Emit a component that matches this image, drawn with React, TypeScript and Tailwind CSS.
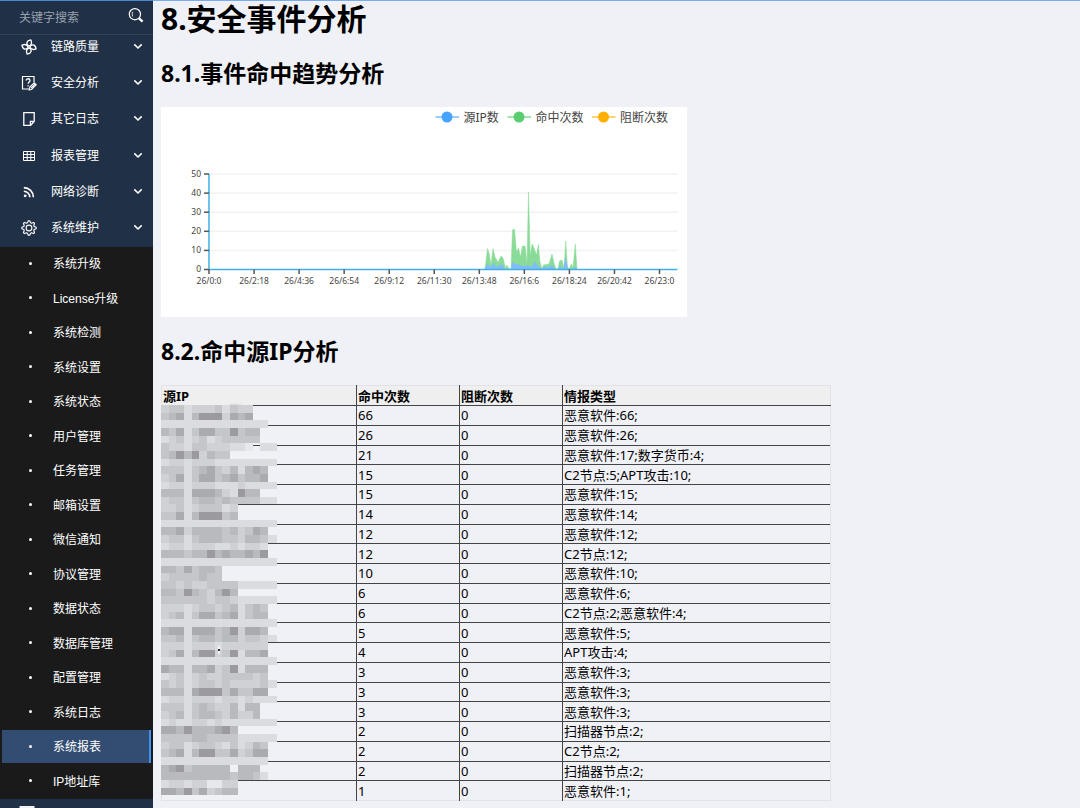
import type { ReactNode } from "react";

const Svg = ({ children }: { children: ReactNode }) => (
  <svg viewBox="0 0 16 16" className="size-4" fill="none" stroke="currentColor" aria-hidden="true">
    {children}
  </svg>
);

const FanIcon = () => (
  <Svg>
    {[12, 102, 192, 282].map((a) => (
      <path
        key={a}
        transform={`rotate(${a} 8 8)`}
        d="M7.8 7.2C4 6.4 4.2 2.2 8.4 .7C10 3 10 5.6 7.8 7.2Z"
        strokeWidth="1.3"
        strokeLinejoin="round"
      />
    ))}
  </Svg>
);

const QuestionNote = () => (
  <Svg>
    <path d="M8.5 14H1.5V1.5H13V7" strokeWidth="1.2" />
    <path d="M5.2 5.4C5.2 3.2 9 3.2 9 5.4C9 6.9 7.1 7 7.1 8.8M7.1 10.3V11.6" strokeWidth="1.3" />
    <path d="M8.2 15L8.8 12L13.2 7.8L15.2 9.8L10.8 14.2ZM10 13.2L14.2 9" strokeWidth="1.1" />
  </Svg>
);

const PageIcon = () => (
  <Svg>
    <path d="M2.8 1.7H13.2V10.4L9.6 14.3H2.8Z" strokeWidth="1.3" />
    <path d="M9.4 14V10.3H13" strokeWidth="1.3" />
  </Svg>
);

const TableIcon = () => (
  <Svg>
    <path d="M2.5 3.5H13.5V12.5H2.5ZM2.5 6.5H13.5M2.5 9.5H13.5M6.2 3.5V12.5M9.8 3.5V12.5" strokeWidth="1" />
  </Svg>
);

const RssIcon = () => (
  <Svg>
    <circle cx="4.2" cy="11.8" r="1.4" fill="currentColor" stroke="none" />
    <path d="M2.8 7.2A6 6 0 0 1 8.8 13.2M2.8 3.6A9.6 9.6 0 0 1 12.4 13.2" strokeWidth="1.6" />
  </Svg>
);

const GearIcon = () => (
  <Svg>
    <path
      d={
        "M" +
        Array.from({ length: 32 }, (_, i) => {
          const a = ((i - 0.5) * Math.PI) / 16;
          const radius = i % 4 < 2 ? 7.2 : 5.4;
          return `${(8 + radius * Math.cos(a)).toFixed(2)} ${(8 + radius * Math.sin(a)).toFixed(2)}`;
        }).join("L") +
        "Z"
      }
      strokeWidth="1.1"
      strokeLinejoin="round"
    />
    <circle cx="8" cy="8" r="2.9" strokeWidth="1.1" />
  </Svg>
);

const Chevron = () => (
  <svg viewBox="0 0 10 10" className="size-2.5" fill="none" stroke="currentColor" strokeWidth="1.6" aria-hidden="true">
    <path d="M1.3 2.4L5 6L8.7 2.4" />
  </svg>
);

const sections: { label: string; icon: ReactNode }[] = [
  { label: "链路质量", icon: <FanIcon /> },
  { label: "安全分析", icon: <QuestionNote /> },
  { label: "其它日志", icon: <PageIcon /> },
  { label: "报表管理", icon: <TableIcon /> },
  { label: "网络诊断", icon: <RssIcon /> },
  { label: "系统维护", icon: <GearIcon /> },
];

const pages = [
  "系统升级", "License升级", "系统检测", "系统设置", "系统状态", "用户管理", "任务管理", "邮箱设置",
  "微信通知", "协议管理", "数据状态", "数据库管理", "配置管理", "系统日志", "系统报表", "IP地址库",
];

function Sidebar() {
  return (
    <aside className="flex h-full w-[153px] shrink-0 flex-col overflow-hidden border-t border-[#4a86d0] bg-[#203046] font-['Liberation_Sans','Noto_Sans_CJK_SC',sans-serif] text-xs text-white">
      <form className="z-10 flex h-[34px] shrink-0 items-center border-b border-[#33435a] bg-[#203046] pr-2 pl-[19px]">
        <input
          type="text"
          aria-label="关键字搜索"
          placeholder="关键字搜索"
          className="w-full min-w-0 bg-transparent outline-none placeholder:text-[#98a1ae]"
        />
        <button type="button" aria-label="搜索" className="shrink-0 pb-1">
          <svg viewBox="0 0 18 18" className="size-[18px]" fill="none" stroke="currentColor" aria-hidden="true">
            <circle cx="7.9" cy="7.2" r="5.6" strokeWidth="1.2" />
            <path d="M5.8 4.8Q4.4 6.9 5.8 9.5" strokeWidth=".8" />
            <path d="M12 11.3L15.6 14.7" strokeWidth="2.3" />
          </svg>
        </button>
      </form>
      <nav className="-mt-1.5">
        <ul className="grid h-[218px] auto-rows-fr">
          {sections.map((s) => (
            <li key={s.label}>
              <button type="button" className="flex h-full w-full items-center pr-2.5 pb-px pl-5 text-left">
                <span className="flex w-[17px] justify-center">{s.icon}</span>
                <span className="ml-3.5 flex-1">{s.label}</span>
                <Chevron />
              </button>
            </li>
          ))}
        </ul>
        <ul className="grid h-[552px] auto-rows-fr bg-[#1a1a1a]">
          {pages.map((p) => (
            <li key={p} className="px-0.5 pb-0.5">
              <a
                href="#"
                className={
                  p === "系统报表"
                    ? "flex h-full items-center border-r-2 border-[#4090f0] bg-[#324d71] pl-[27px]"
                    : "flex h-full items-center pl-[27px]"
                }
              >
                <span className="size-[3px] rounded-full bg-white" />
                <span className="ml-[21px] pt-0.5">{p}</span>
              </a>
            </li>
          ))}
        </ul>
        <div className="flex h-8 items-center pl-[19px]">
          <svg viewBox="0 0 16 18" className="h-[18px] w-4" aria-hidden="true">
            <rect x=".5" width="15" height="12" fill="#f2f2f2" />
            <rect x="4" y="14" width="8" height="2" fill="#f2f2f2" />
          </svg>
        </div>
      </nav>
    </aside>
  );
}

const hits =
  "485,269 487.5,248.5 489,253 491,265 493,248.5 495,257 498,262.5 501,256 503,258 505,266 506,268 507,265 509,269 511,269 512.5,230 514.5,229 516.5,252 518.5,248 520.5,257 522.5,246 525,246 527,263 528.5,192 530.2,256 532,244 534,248 536.5,255 538.3,244.5 540,262 542,269 543.5,265 549,264 552,254 554,263 556,269 558,269 559.5,261 562,260 564,269 565.7,241 567.5,267 569,269 571.5,264 573,268 575.3,244 577,269";
const sources =
  "485,269 487,263.5 491,267 494,262.5 496,267 502,264 505,269 511,269 512,262 515,264 518,264.5 524,266 528,265 531,267 535,261.5 538,266 542,269 543,267 549,267 552,265 555,269 558,269 560,266 563,269 565.7,257 568,269 573,269 575,267 577,269";
const times = ["26/0:0", "26/2:18", "26/4:36", "26/6:54", "26/9:12", "26/11:30", "26/13:48", "26/16:6", "26/18:24", "26/20:42", "26/23:0"];
const legend = [
  { label: "源IP数", x: 549, color: "#46a3ff" },
  { label: "命中次数", x: 693, color: "#5ace6e" },
  { label: "阻断次数", x: 862, color: "#ffaf00" },
];

function TrendChart() {
  return (
    <svg
      viewBox="0 0 1052 420"
      role="img"
      aria-label="事件命中趋势"
      className="block w-[526px] max-w-full bg-white font-['Noto_Sans','Noto_Sans_CJK_SC',sans-serif]"
    >
      {legend.map((l) => (
        <g key={l.label}>
          <path d={`M${l.x} 20H${l.x + 47}`} stroke={l.color} strokeOpacity=".55" strokeWidth="4" />
          <circle cx={l.x + 23} cy="20" r="11" fill={l.color} />
          <text x={l.x + 56} y="29" fontSize="24" fill="#444">{l.label}</text>
        </g>
      ))}
      {[50, 40, 30, 20, 10, 0].map((v, i) => (
        <g key={v}>
          {v > 0 && <path d={`M96 ${134 + i * 38.2}H1033`} stroke="#f2f2f2" strokeWidth="3" />}
          <text x="80" y={139 + i * 38.2} fontSize="17" textAnchor="end" fill="#444">{v}</text>
        </g>
      ))}
      <g transform="scale(2) translate(-161 -107)">
        <polygon points={hits} fill="#8adb98" stroke="#8adb98" strokeWidth=".5" />
        <polygon points={sources} fill="#80bdf9" />
      </g>
      <path d="M96 134V325H1033" fill="none" stroke="#42aee8" strokeWidth="3" />
      {[0, 1, 2, 3, 4, 5].map((i) => (
        <path key={i} d={`M86 ${134 + i * 38.2}H96`} stroke="#555" strokeWidth="3" />
      ))}
      {times.map((t, i) => (
        <g key={t}>
          <path d={`M${96 + i * 90.1} 325V334`} stroke="#555" strokeWidth="3" />
          <text x={96 + i * 90.1} y="353" fontSize="17" textAnchor="middle" fill="#444">{t}</text>
        </g>
      ))}
    </svg>
  );
}

const rows: [number, number, string][] = [
  [66, 0, "恶意软件:66;"],
  [26, 0, "恶意软件:26;"],
  [21, 0, "恶意软件:17;数字货币:4;"],
  [15, 0, "C2节点:5;APT攻击:10;"],
  [15, 0, "恶意软件:15;"],
  [14, 0, "恶意软件:14;"],
  [12, 0, "恶意软件:12;"],
  [12, 0, "C2节点:12;"],
  [10, 0, "恶意软件:10;"],
  [6, 0, "恶意软件:6;"],
  [6, 0, "C2节点:2;恶意软件:4;"],
  [5, 0, "恶意软件:5;"],
  [4, 0, "APT攻击:4;"],
  [3, 0, "恶意软件:3;"],
  [3, 0, "恶意软件:3;"],
  [3, 0, "恶意软件:3;"],
  [2, 0, "扫描器节点:2;"],
  [2, 0, "C2节点:2;"],
  [2, 0, "扫描器节点:2;"],
  [1, 0, "恶意软件:1;"],
];

// Mosaic that hides the source addresses: one letter per cell, a is the darkest.
const mosaic = [
  "eddfeeedfdee", "dcbfcaaaebcb", "ffffffffffffff", "cdbfdbbddadcc", "fedfedfeddddd",
  "deefddeeeffg.fff", "dcacaecdd", "feefeeefffffffff", "dddfdcbdecfcbc", "edbfdbbdcbdccb",
  "feefeeefffefffff", "cccfbbbcefacc", "eddfdccdcddddfff", "eedfedddfe", "ddbfcaaadc",
  "ffffffffffffffff", "ccbeccccdcedbc", "eddfdcccddeccdff", "feefeeeffefeef", "cccdccacbccbca",
  "ffffffffffffffff", "ccdbdccd", "eddddcdd", "ddedeeddddffffff", "ccdacdecac",
  "ddddddeddeffffff", "eeefeddedcfdcd", "edcfdbbdcbfdcc", "ffffffffffffffff", "cbbfbbbdcaebbc",
  "ddcfdccdcceddeff", "eeefeeefeeeeee", "edbfcaaedafccb", "ffffffffffffffff", "bccfccbedafccc",
  "fedfedeedddded", "dedfeddedeeeedff", "cccfbaaadbddbb", "feefeeefeefeffff", "dddfdcdeecfcc",
  "edcfdccdeceec", "feffeefeffffffff", "bbcacccbac", "ddddccddddffffff", "eddfeddefdfecd",
  "dcbfcaaddbedbb", "ffffffffffffff", "cbadccccc.ccc", "cccccccccdccdf", "feefeeggee", "bbcadbedcc",
];
const shades: Record<string, string> = {
  a: "#9b9b9f", b: "#aaabae", c: "#b9babd", d: "#c5c6c9", e: "#d0d1d4", f: "#dbdce0", g: "#e7e8ec",
};
const CELL = 7.65;

function Mosaic() {
  return (
    <svg
      viewBox="0 0 117 400"
      shapeRendering="crispEdges"
      className="absolute top-[18px] left-0 h-[400px] w-[117px]"
      aria-hidden="true"
    >
      <path d="M0 2H20L30 4H58L70 1Q78 -1 86 4L92 9V14H0Z" fill="#dbdce0" shapeRendering="auto" />
      {mosaic.map((line, r) =>
        [...line].map((c, i) =>
          c === "." ? null : (
            <rect
              key={`${r}-${i}`}
              x={i * CELL}
              y={2 + r * CELL}
              width={Math.min(CELL, 116 - i * CELL)}
              height={CELL}
              fill={shades[c]}
            />
          ),
        ),
      )}
      <rect x="57" y="243" width="2" height="8" fill="#f3f3f6" />
      <rect x="57" y="246" width="2" height="2" fill="#333" />
    </svg>
  );
}

function HitTable() {
  return (
    <div className="relative w-[670px] max-w-full">
      <table className="h-[416px] w-full table-fixed border-collapse border border-[#e2e3e8] text-[13px] leading-4 text-black">
        <colgroup>
          <col className="w-[195px]" />
          <col className="w-[103px]" />
          <col className="w-[103px]" />
          <col />
        </colgroup>
        <thead className="bg-[#efefef] text-left">
          <tr className="h-5">
            {["源IP", "命中次数", "阻断次数", "情报类型"].map((h) => (
              <th key={h} className="border-r border-b border-[#444] p-0 pl-px font-bold last:border-r-[#e2e3e8]">{h}</th>
            ))}
          </tr>
        </thead>
        <tbody>
          {rows.map(([hit, block, kind], i) => (
            <tr key={i} className="border-b border-[#444] last:border-b-[#e2e3e8]">
              <td className="border-r border-[#444] p-0" />
              <td className="border-r border-[#444] p-0 pl-px">{hit}</td>
              <td className="border-r border-[#444] p-0 pl-px">{block}</td>
              <td className="border-r border-r-[#e2e3e8] p-0 pl-px">{kind}</td>
            </tr>
          ))}
        </tbody>
      </table>
      <Mosaic />
    </div>
  );
}

export default function App() {
  return (
    <div className="flex h-screen overflow-hidden bg-[#f0f1f6]">
      <Sidebar />
      <main className="min-w-0 flex-1 border-t border-[#7aabee] pl-2 font-['Noto_Sans','Noto_Sans_CJK_SC',sans-serif] text-black">
        <h1 className="mb-5 text-[30px] leading-9 font-bold">8.安全事件分析</h1>
        <h2 className="my-[18px] text-[23px] leading-8 font-bold">8.1.事件命中趋势分析</h2>
        <TrendChart />
        <h2 className="my-[18px] text-[23px] leading-8 font-bold">8.2.命中源IP分析</h2>
        <HitTable />
      </main>
    </div>
  );
}
